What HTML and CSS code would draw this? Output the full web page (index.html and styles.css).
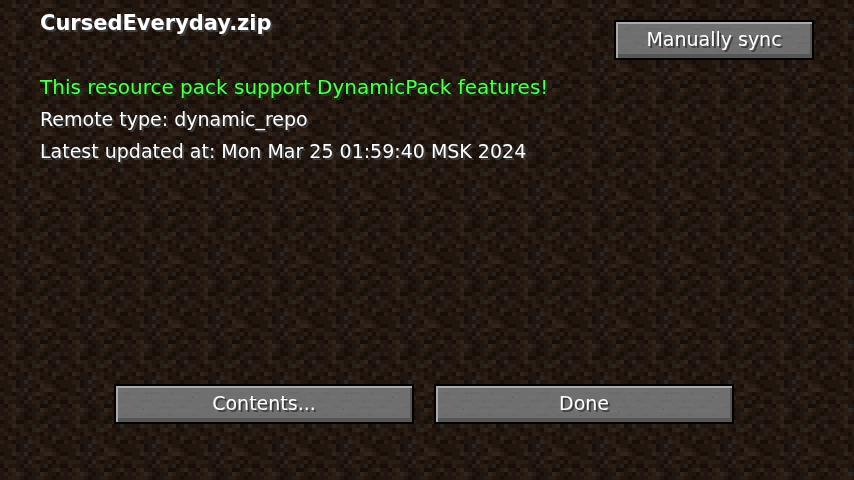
FILE: index.html
```html
<!DOCTYPE html>
<html lang="en">
<head>
<meta charset="utf-8">
<title>CursedEveryday.zip</title>
<link rel="stylesheet" href="styles.css">
</head>
<body>
<svg class="dirt" aria-hidden="true" shape-rendering="crispEdges">
  <defs>
    <pattern id="hatch" width="2" height="2" patternUnits="userSpaceOnUse"><path fill="#1f1812" d="M0 0h2v2H0z"/><path fill="#262a2b" d="M0 0h1v1H0zM1 1h1v1H1z"/></pattern>
    <pattern id="dirt" width="64" height="64" patternUnits="userSpaceOnUse">
      <path fill="#20160f" d="M0 0h64v64H0z"/>
      <g id="cells"></g>
      <path fill="url(#hatch)" d="M4 12h4v4H4zM44 16h4v4h-4zM32 44h4v4h-4z"/>
    </pattern>
    <pattern id="grain" width="200" height="36" patternUnits="userSpaceOnUse">
      <path fill="#6f6f6f" d="M0 0h200v36H0z"/>
      <path stroke="#727272" stroke-width="2" stroke-dasharray="10 14 6 8 16 22" d="M0 5h200M14 11h186M4 19h196M22 25h178"/>
      <path stroke="#6b6b6b" stroke-width="2" stroke-dasharray="6 18 12 10 4 20" d="M8 7h192M0 15h200M18 21h182M6 29h194"/>
      <path fill="#505050" d="M30 7h1v1h-1zM76 11h1v1h-1zM27 23h1v1h-1zM182 25h1v1h-1zM144 29h1v1h-1z"/>
    </pattern>
  </defs>
  <rect width="100%" height="100%" fill="url(#dirt)"/>
</svg>
<main class="screen">
  <header class="top">
    <h1 class="title">CursedEveryday.zip</h1>
    <button class="btn sync" type="button"><svg class="stone" aria-hidden="true"><rect width="100%" height="100%" fill="url(#grain)"/></svg><span class="label">Manually sync</span></button>
  </header>
  <section class="info">
    <p class="line good">This resource pack support DynamicPack features!</p>
    <p class="line">Remote type: dynamic_repo</p>
    <p class="line">Latest updated at: Mon Mar 25 01:59:40 MSK 2024</p>
  </section>
  <footer class="actions">
    <button class="btn" type="button"><svg class="stone" aria-hidden="true"><rect width="100%" height="100%" fill="url(#grain)"/></svg><span class="label">Contents...</span></button>
    <button class="btn" type="button"><svg class="stone" aria-hidden="true"><rect width="100%" height="100%" fill="url(#grain)"/></svg><span class="label">Done</span></button>
  </footer>
</main>
<script src="dirt.js"></script>
</body>
</html>
```
FILE: dirt.js
```js
// 16 x 16 dirt tile; each digit is a shade, from darkest soil (0) to grit (4).
const tile = [
  '1112011210322101',
  '0113214011233210',
  '2110121123210112',
  '1122110310112021',
  '0211102122110110',
  '1023110112001231',
  '1212421011321102',
  '1122210112211011',
  '2113110012101221',
  '0122001211012110',
  '1113221121230141',
  '2101121013211012',
  '1211022111021112',
  '1032110212110321',
  '2110111322011200',
  '1122014112211011'
];
const shades = ['#170e09', '#20160f', '#291d14', '#33241b', '#23282b'];
const paths = shades.map(() => '');
tile.forEach((row, y) => [...row].forEach((shade, x) => {
  paths[shade] += `M${x * 4} ${y * 4}h4v4h-4z`;
}));
document.getElementById('cells').innerHTML =
  paths.map((d, i) => `<path fill="${shades[i]}" d="${d}"/>`).join('');
```
FILE: styles.css
```css
* { box-sizing: border-box; }
body {
  margin: 0;
  background: #20160f;
  color: #fff;
  font-family: "DejaVu Sans", sans-serif;
  font-size: 19px;
  line-height: 32px;
}
.dirt {
  position: fixed;
  inset: 0;
  width: 100%;
  height: 100%;
}
.screen {
  position: relative;
  display: flex;
  flex-direction: column;
  min-height: 100vh;
  padding: 20px 40px 56px;
}
.top {
  display: flex;
  justify-content: space-between;
  align-items: flex-start;
}
.title {
  margin: 0;
  font-size: 21px;
  line-height: 6px;
  text-shadow: 2px 2px #3e4042;
}
.info { margin-top: 11px; }
.line {
  margin: 0;
  text-shadow: 2px 2px #3e4042;
}
.good {
  color: #55ff55;
  font-size: 20px;
  text-shadow: 2px 2px #154515;
}
.actions {
  display: flex;
  justify-content: center;
  gap: 20px;
  margin-top: auto;
  padding-right: 6px;
}
.btn {
  position: relative;
  width: 300px;
  height: 40px;
  padding: 0 0 2px;
  border: 2px solid #000;
  background: #6f6f6f;
  color: #fff;
  font: inherit;
  line-height: 34px;
  text-shadow: 2px 2px #3c3c3c;
}
.btn::after {
  content: "";
  position: absolute;
  inset: 0;
  box-shadow: inset 2px 2px #aaa, inset -2px -4px #565656;
}
.stone {
  position: absolute;
  inset: 0;
  width: 100%;
  height: 100%;
}
.label { position: relative; }
.sync { width: 200px; }
```
